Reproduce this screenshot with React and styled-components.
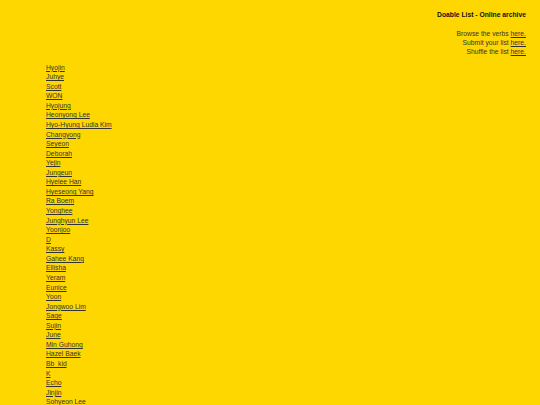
import React from 'react';
import styled, { createGlobalStyle } from 'styled-components';

const GlobalStyle = createGlobalStyle`
  html, body {
    margin: 0;
    padding: 0;
    background-color: #FFD700;
  }
  body {
    font-family: "Liberation Sans", Arial, sans-serif;
    color: #333;
  }
`;

const Main = styled.main`
  padding: 10px 14px 0 46px;
  font-size: 6.75px;
`;

const Header = styled.header`
  text-align: right;
`;

const Title = styled.h1`
  margin: 0;
  font-size: 6.75px;
  line-height: 9px;
  font-weight: bold;
  color: #111;
`;

const Nav = styled.div`
  margin-top: 10px;
  line-height: 9.2px;
`;

const Link = styled.a`
  color: #333;
  text-decoration: underline;
`;

const List = styled.ul`
  list-style: none;
  margin: 6px 0 0;
  padding: 0;
  line-height: 9.57px;
`;

const names = [
  'Hyojin', 'Juhye', 'Scott', 'WON', 'Hyojung', 'Heonyong Lee',
  'Hyo-Hyung Ludia Kim', 'Changyong', 'Seyeon', 'Deborah', 'Yejin',
  'Jungeun', 'Hyelee Han', 'Hyeseong Yang', 'Ra Boem', 'Yonghee',
  'Junghyun Lee', 'Yoonjoo', 'D', 'Kassy', 'Gahee Kang', 'Ellisha',
  'Yeram', 'Eunice', 'Yoon', 'Jongwoo Lim', 'Sage', 'Sujin', 'June',
  'Min Guhong', 'Hazel Baek', 'Bb_kid', 'K', 'Echo', 'Jinjin',
  'Sohyeon Lee',
];

const App = () => {
  return (
    <>
      <GlobalStyle />
      <Main>
        <Header>
          <Title>Doable List - Online archive</Title>
          <Nav>
            <div>Browse the verbs <Link href="#">here.</Link></div>
            <div>Submit your list <Link href="#">here.</Link></div>
            <div>Shuffle the list <Link href="#">here.</Link></div>
          </Nav>
        </Header>
        <List>
          {names.map((name, i) => (
            <li key={i}>
              <Link href="#">{name}</Link>
            </li>
          ))}
        </List>
      </Main>
    </>
  );
};

export default App;
